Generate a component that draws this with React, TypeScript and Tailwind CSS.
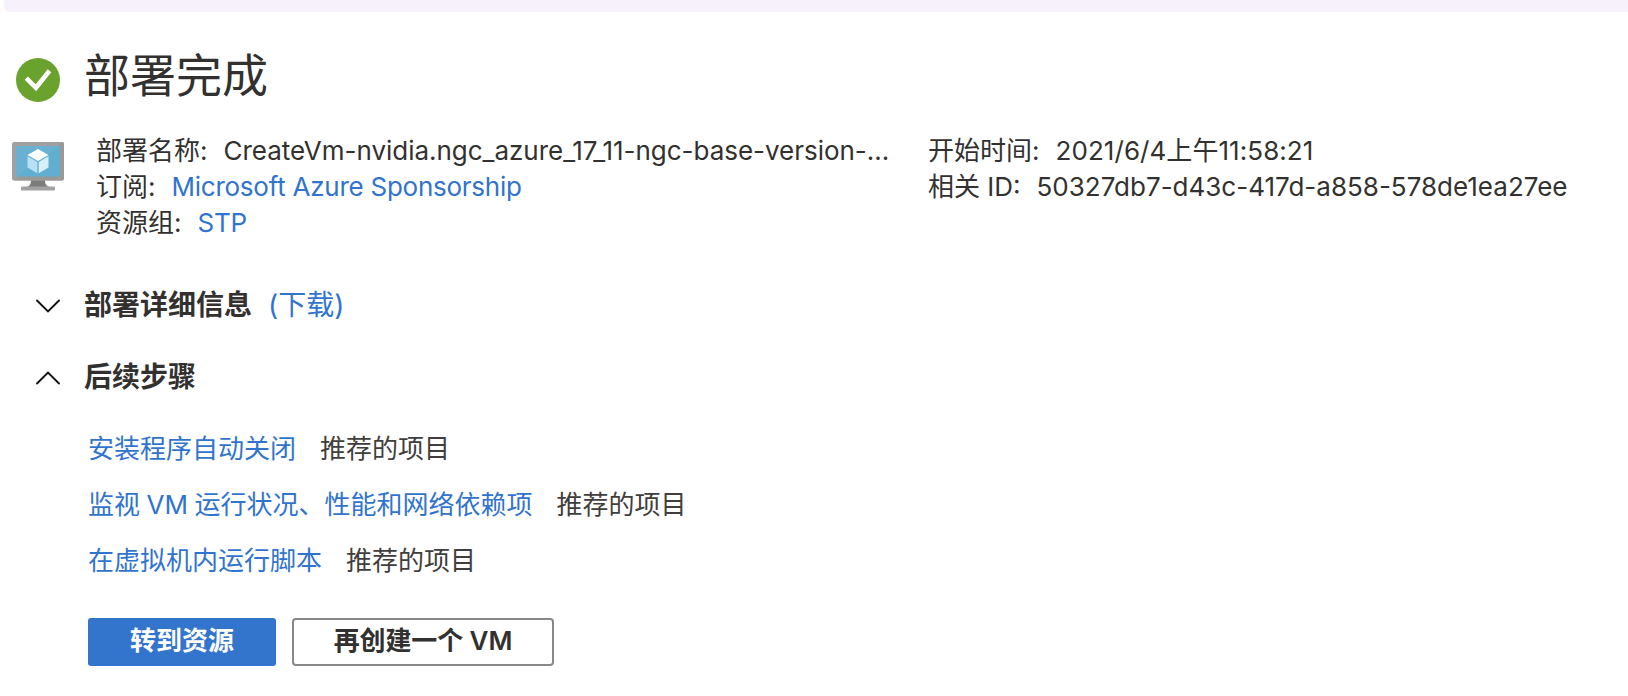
import type { ReactNode } from "react";

function SuccessIcon() {
  return (
    <svg width="44" height="44" viewBox="0 0 44 44" fill="none">
      <circle cx="22" cy="22" r="22" fill="#6aa22e" />
      <path d="M10.300 20.200 L20 29.800 L33.500 12.700" stroke="#fff" strokeWidth="4.600" />
    </svg>
  );
}

function VmIcon() {
  return (
    <svg width="52" height="49" viewBox="0 0 52 49">
      <path d="M19 38h14c0 5 2 6.500 6 7.500H13c4-1 6-2.500 6-7.500z" fill="#7c7c7c" />
      <rect x="9" y="44.500" width="34" height="4" rx="1" fill="#a2a2a2" />
      <rect x="0" y="0" width="52" height="38.500" rx="2" fill="#a0a0a0" />
      <path d="M52 2v34.500a2 2 0 0 1-2 2H2L50 0a2 2 0 0 1 2 2z" fill="#999" />
      <rect x="4" y="4" width="44" height="30.500" fill="#60aed0" />
      <path d="M4 4h44L4 34.500z" fill="#68b1d2" />
      <path d="M26 7l10.500 6L26 19l-10.500-6z" fill="#fff" />
      <path d="M15.500 14.300l9.800 5.700v11.300l-9.800-5.800z" fill="#b9e0f3" />
      <path d="M36.500 14.300L26.700 20v11.300l9.800-5.800z" fill="#d8eff9" />
    </svg>
  );
}

function Chevron({ up = false }: { up?: boolean }) {
  return (
    <svg
      className="mt-0.5"
      width="24"
      height="14"
      viewBox="0 0 24 14"
      fill="none"
      stroke="#111"
      strokeWidth="1.900"
      strokeLinecap="round"
    >
      <path d={up ? "M1 12.500 L12 1.600 L23 12.500" : "M1 1.500 L12 12.400 L23 1.500"} />
    </svg>
  );
}

function InfoRow({ label, children }: { label: string; children: ReactNode }) {
  return (
    <div className="flex h-9 items-center gap-4 whitespace-nowrap">
      <span>{label}:</span>
      {children}
    </div>
  );
}

const steps = [
  "安装程序自动关闭",
  "监视 VM 运行状况、性能和网络依赖项",
  "在虚拟机内运行脚本",
];

export default function App() {
  return (
    <main className="h-[696px] w-full overflow-hidden bg-white font-['Inter','Noto_Sans_CJK_SC',sans-serif] text-[26px] leading-9 text-[#323130]">
      <div className="ml-1 h-3 rounded-bl-md bg-[#f6f1fa]" />

      <header className="flex h-[121px] items-center pl-4">
        <div className="mt-3.5">
          <SuccessIcon />
        </div>
        <h1 className="ml-6 mt-1 text-[46px] leading-[60px]">部署完成</h1>
      </header>

      <section className="flex pl-3">
        <div className="w-[84px] pt-[9px]">
          <VmIcon />
        </div>
        <div className="w-[832px]">
          <InfoRow label="部署名称">
            <span className="tracking-[-0.02px]">CreateVm-nvidia.ngc_azure_17_11-ngc-base-version-...</span>
          </InfoRow>
          <InfoRow label="订阅">
            <a className="tracking-[-0.25px] text-[#3174cd]">Microsoft Azure Sponsorship</a>
          </InfoRow>
          <InfoRow label="资源组">
            <a className="tracking-[-0.25px] text-[#3174cd]">STP</a>
          </InfoRow>
        </div>
        <div>
          <InfoRow label="开始时间">
            <span className="tracking-[0.06px]">2021/6/4上午11:58:21</span>
          </InfoRow>
          <InfoRow label="相关 ID">
            <span>50327db7-d43c-417d-a858-578de1ea27ee</span>
          </InfoRow>
        </div>
      </section>

      <section className="mt-[46px] flex h-9 items-center pl-9">
        <Chevron />
        <h2 className="ml-6 text-[28px] font-semibold">部署详细信息</h2>
        <a className="ml-4 text-[28px] text-[#3174cd]">(下载)</a>
      </section>

      <section className="mt-9 flex h-9 items-center pl-9">
        <Chevron up />
        <h2 className="ml-6 text-[28px] font-semibold">后续步骤</h2>
      </section>

      <ul className="mt-9 flex flex-col gap-5 pl-[88px]">
        {steps.map((step) => (
          <li key={step} className="flex gap-6">
            <a className="text-[#3174cd] [word-spacing:-0.8px]">{step}</a>
            <span className="text-[#3f3e3d]">推荐的项目</span>
          </li>
        ))}
      </ul>

      <div className="mt-[39px] flex gap-4 pl-[88px]">
        <button className="h-12 w-[188px] rounded-[3px] bg-[#3375cd] pb-0.5 font-semibold text-white">
          转到资源
        </button>
        <button className="h-12 w-[262px] rounded-[4px] border-2 border-[#8a8886] bg-white pb-0.5 font-semibold tracking-[-0.1px]">
          再创建一个 VM
        </button>
      </div>
    </main>
  );
}
